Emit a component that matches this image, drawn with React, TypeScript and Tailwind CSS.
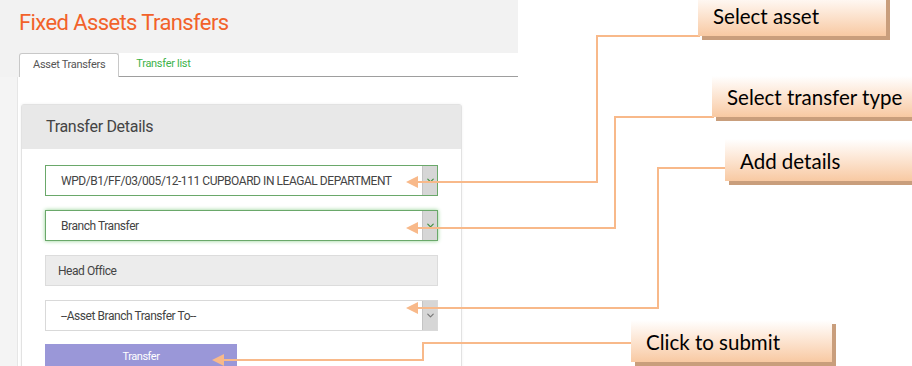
import { ChevronDown } from "lucide-react"

// Annotated screenshot: the form on the left, orange callouts on the right.
const callouts = [
  { label: "Select asset", box: "left-[698px] top-[-6px] w-[188px] h-[42px]" },
  { label: "Select transfer type", box: "left-[712px] top-[76px] w-[204px] h-[41px]" },
  { label: "Add details", box: "left-[725px] top-[139px] w-[190px] h-[42px]" },
  { label: "Click to submit", box: "left-[631px] top-[320px] w-[201px] h-[42px]" },
]

function SelectBox({
  value,
  focused = false,
  tone = "green",
}: {
  value: string
  focused?: boolean
  tone?: "green" | "gray"
}) {
  return (
    <div
      className={`flex h-[31px] items-stretch border bg-white ${
        tone === "green" ? "border-[#6aa86a]" : "border-[#d9d9d9]"
      } ${focused ? "shadow-[0_0_4px_#8fd08f]" : ""}`}
    >
      <div className="flex flex-1 items-center pl-[15px] text-[12px] text-[#444]">{value}</div>
      <div className="flex w-[15px] items-center justify-center border-l border-[#c4c4c4] bg-[#d6d6d6]">
        <ChevronDown
          size={11}
          strokeWidth={2.5}
          className={tone === "green" ? "text-[#3f8f3f]" : "text-[#777]"}
        />
      </div>
    </div>
  )
}

export default function App() {
  return (
    <div className="relative h-[366px] w-[912px] overflow-hidden bg-white font-['Roboto',sans-serif]">
      <div className="flex h-full w-[518px] flex-col bg-[#f2f2f2]">
        <div className="h-[53px] shrink-0 pl-[19px] pt-[6px]">
          <h1 className="text-[22px] font-normal tracking-[-0.6px] text-[#f2622a]">
            Fixed Assets Transfers
          </h1>
        </div>
        <div className="flex flex-1 flex-col bg-white">
          <div className="flex h-[24px] items-end bg-[#f2f2f2]">
            <div className="w-[19px] shrink-0 self-stretch" />
            <div className="flex h-[24px] items-center rounded-t-[3px] border border-b-0 border-[#c8c8c8] bg-white px-[13px] text-[11px] tracking-[-0.3px] text-[#555]">
              Asset Transfers
            </div>
            <div className="flex h-full flex-1 items-center border-b border-[#9e9e9e] bg-white pl-[17px] text-[11px] tracking-[-0.3px] text-[#3db34a]">
              Transfer list
            </div>
          </div>
          <div className="flex flex-1">
            <div className="w-[18px] shrink-0 border-r border-[#e6e6e6] bg-[#f4f4f4]" />
            <div className="flex-1 pl-[3px] pt-[27px]">
              <div className="w-[441px] rounded-t-[3px] border border-[#e2e2e2] bg-white shadow-[0_0_3px_rgba(0,0,0,0.06)]">
                <div className="flex h-[44px] items-center bg-[#e8e8e8] pl-[24px] text-[16px] tracking-[-0.3px] text-[#444]">
                  Transfer Details
                </div>
                <div className="flex flex-col gap-[14px] px-[23px] pt-[16px] tracking-[-0.45px]">
                  <SelectBox value="WPD/B1/FF/03/005/12-111 CUPBOARD IN LEAGAL DEPARTMENT" />
                  <SelectBox value="Branch Transfer" focused />
                  <div className="flex h-[31px] items-center border border-[#dcdcdc] bg-[#ececec] pl-[12px] text-[12px] text-[#444]">
                    Head Office
                  </div>
                  <SelectBox value="--Asset Branch Transfer To--" tone="gray" />
                  <button className="-mt-[1px] h-[26px] w-[192px] bg-[#9a97d8] text-[11px] text-white">
                    Transfer
                  </button>
                </div>
              </div>
            </div>
          </div>
        </div>
      </div>

      {/* connector lines, drawn over the screenshot */}
      <svg className="absolute inset-0" width="912" height="366" fill="none">
        <g stroke="#f8b98a" strokeWidth="2">
          <polyline points="700,36 597,36 597,182 414,182" />
          <polyline points="714,117 615,117 615,228 414,228" />
          <polyline points="727,168 658,168 658,308 414,308" />
          <polyline points="633,343 423,343 423,360 220,360" />
        </g>
        <g fill="#f8b98a">
          <polygon points="406,182 418,176 418,188" />
          <polygon points="406,228 418,222 418,234" />
          <polygon points="406,308 418,302 418,314" />
          <polygon points="212,360 224,354 224,366" />
        </g>
      </svg>

      {callouts.map((c) => (
        <div
          key={c.label}
          className={`absolute ${c.box} flex items-end bg-gradient-to-b from-white to-[#f8c9a2] pb-[7px] pl-[15px] font-['Lato',sans-serif] text-[20.5px] leading-[26px] text-black shadow-[4px_4px_0_#c99e7c]`}
        >
          {c.label}
        </div>
      ))}
    </div>
  )
}
